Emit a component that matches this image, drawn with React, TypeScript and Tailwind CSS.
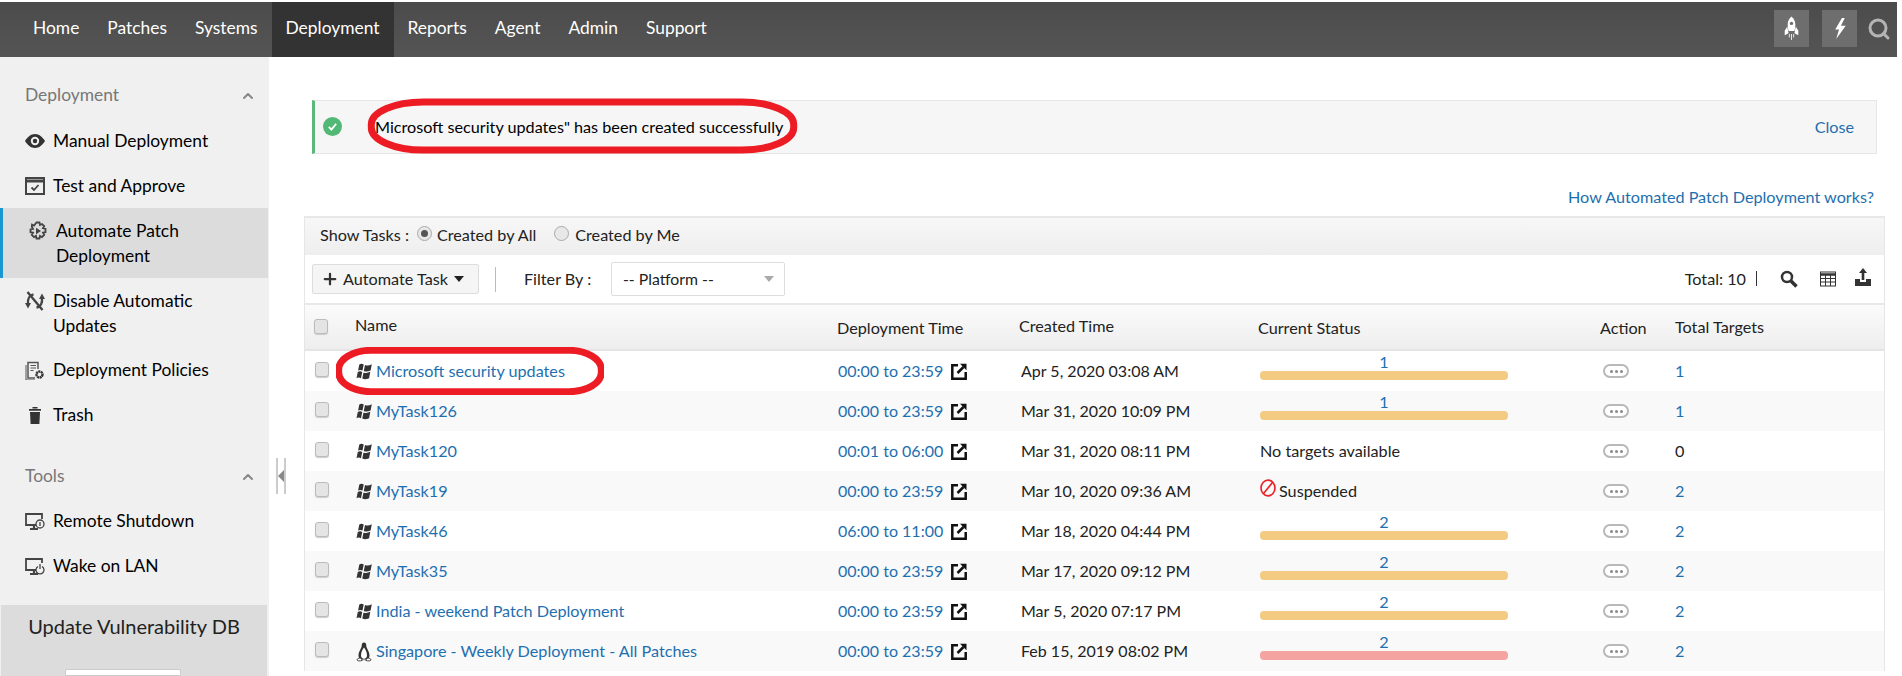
import { ChevronUp, Search, Plus } from "lucide-react";
import type { ReactNode } from "react";

const navItems = ["Home", "Patches", "Systems", "Deployment", "Reports", "Agent", "Admin", "Support"];

const tasks = [
    { name: "Microsoft security updates", time: "00:00 to 23:59", created: "Apr 5, 2020 03:08 AM", status: "1", targets: "1", os: "win" },
    { name: "MyTask126", time: "00:00 to 23:59", created: "Mar 31, 2020 10:09 PM", status: "1", targets: "1", os: "win" },
    { name: "MyTask120", time: "00:01 to 06:00", created: "Mar 31, 2020 08:11 PM", status: "none", targets: "0", os: "win" },
    { name: "MyTask19", time: "00:00 to 23:59", created: "Mar 10, 2020 09:36 AM", status: "suspended", targets: "2", os: "win" },
    { name: "MyTask46", time: "06:00 to 11:00", created: "Mar 18, 2020 04:44 PM", status: "2", targets: "2", os: "win" },
    { name: "MyTask35", time: "00:00 to 23:59", created: "Mar 17, 2020 09:12 PM", status: "2", targets: "2", os: "win" },
    { name: "India - weekend Patch Deployment", time: "00:00 to 23:59", created: "Mar 5, 2020 07:17 PM", status: "2", targets: "2", os: "win" },
    { name: "Singapore - Weekly Deployment - All Patches", time: "00:00 to 23:59", created: "Feb 15, 2019 08:02 PM", status: "2", targets: "2", os: "linux", failed: true },
];

const rowGrid = "grid grid-cols-[50px_482px_182px_239px_342px_75px_1fr] items-center";

function WindowsIcon() {
    return (
        <svg viewBox="0 0 17 17" className="w-[17px] h-[17px] shrink-0 mt-[2px]" fill="#333">
            <path d="M3.300 1.600c1.500-1 3-.9 4.400-.2L6.500 7.600c-1.500-.8-3-.9-4.400 0z" />
            <path d="M9 1.900c1.900 1 4 .8 6.800-.6l-1.200 6.200c-2.600 1.300-4.700 1.400-6.800.6z" />
            <path d="M1.800 9c1.500-.9 2.900-.9 4.400-.1L5 15.300c-1.500-.9-3-1-4.500-.1z" />
            <path d="M7.500 9.400c2 .8 4.200.7 6.800-.6l-1.200 6.400c-2.700 1.300-4.800 1.300-6.800.4z" />
        </svg>
    );
}

function LinuxIcon() {
    return (
        <svg viewBox="0 0 16 20" className="w-4 h-5 shrink-0 mt-[2px]">
            <path d="M8 .5C6.200.5 5.600 2 5.700 4c0 2-3.200 5.500-3.200 9.500 0 1.800.8 3.200 2 4h7c1.200-.8 2-2.200 2-4 0-4-3.200-7.500-3.200-9.500C10.400 2 9.800.5 8 .5z" fill="#333" />
            <path d="M8 5.500c-1.300 1.500-3 4.500-3 8 0 1.800 1.200 3.300 3 3.300s3-1.500 3-3.300c0-3.500-1.700-6.500-3-8z" fill="#fff" />
            <path d="M4.500 16c-1.500 0-3.500.8-3.500 1.800s2.500 1.700 5.500.5zM11.500 16c1.500 0 3.500.8 3.500 1.800s-2.500 1.700-5.500.5z" fill="#fff" stroke="#333" strokeWidth="0.900" />
        </svg>
    );
}

function OpenIcon() {
    return (
        <svg viewBox="0 0 16 17" className="w-4 h-[17px] shrink-0" fill="none" stroke="#111" strokeWidth="2.500">
            <path d="M7 2.300H1.300v13.400h13.400V9" />
            <path d="M6.500 10 12.500 4" />
            <path d="M9 .8h6.500v6.500z" fill="#111" stroke="none" />
        </svg>
    );
}

function ActionDots() {
    return (
        <span className="flex items-center justify-center gap-[2px] w-[26px] h-[14px] rounded-full border-2 border-[#b9b9b9] bg-white">
            <i className="w-[3px] h-[3px] rounded-full bg-[#888]" />
            <i className="w-[3px] h-[3px] rounded-full bg-[#888]" />
            <i className="w-[3px] h-[3px] rounded-full bg-[#888]" />
        </span>
    );
}

function Checkbox() {
    return <span className="block w-[14px] h-[15px] rounded-[3px] border border-[#bbb] bg-[#e4e4e4] shadow-[0_1px_1px_#ccc]" />;
}

function Radio({ on }: { on?: boolean }) {
    return (
        <span className="flex items-center justify-center w-[15px] h-[15px] rounded-full border border-[#aaa] bg-[#e8e8e8] -mt-1">
            {on && <i className="w-[7px] h-[7px] rounded-full bg-[#555]" />}
        </span>
    );
}

function RedRing({ className }: { className: string }) {
    return (
        <svg className={`absolute pointer-events-none ${className}`} viewBox="0 0 100 100" preserveAspectRatio="none">
            <rect x="1" y="7" width="98" height="86" rx="12" ry="40" fill="none" stroke="#ed1c24" strokeWidth="7" vectorEffect="non-scaling-stroke" />
        </svg>
    );
}

function SideItem({ icon, children, active }: { icon: ReactNode; children: ReactNode; active?: boolean }) {
    return (
        <div
            className={
                active
                    ? "flex items-start h-[70px] w-[268px] pl-[25px] pt-[10px] border-l-[3px] border-[#1a97d0] bg-[#dcdcdc] leading-[25px] text-[17.400px] text-black"
                    : "flex items-start pl-[25px] pt-[10px] pb-[10px] leading-[25px] text-[17.400px] text-black"
            }
        >
            <span className="w-[28px] h-[25px] flex items-center shrink-0">{icon}</span>
            <span>{children}</span>
        </div>
    );
}

function SideHeading({ label }: { label: string }) {
    return (
        <div className="flex items-center justify-between pl-[25px] pr-[13px] h-[25px] text-[17.400px] text-[#777]">
            {label}
            <ChevronUp size={16} strokeWidth={3} className="text-[#888]" />
        </div>
    );
}

const ic = "w-[20px] h-[20px] shrink-0";

function Sidebar() {
    return (
        <aside className="w-[269px] shrink-0 bg-[#f0f0f0] flex flex-col">
            <div className="pt-[26px]">
                <SideHeading label="Deployment" />
                <div className="mt-[10px]">
                    <SideItem
                        icon={
                            <svg viewBox="0 0 20 14" className="w-[20px] h-[14px]" fill="#333">
                                <path fillRule="evenodd" d="M10 0c4 0 7.500 2.800 10 7-2.500 4.200-6 7-10 7S2.500 11.200 0 7c2.500-4.200 6-7 10-7zm0 2.800a4.200 4.200 0 1 0 0 8.400 4.200 4.200 0 0 0 0-8.400z" />
                                <circle cx="10" cy="7" r="2.200" />
                            </svg>
                        }
                    >
                        Manual Deployment
                    </SideItem>
                    <SideItem
                        icon={
                            <svg viewBox="0 0 20 20" className={ic} fill="none" stroke="#444" strokeWidth="2">
                                <rect x="1" y="2" width="18" height="16" />
                                <path d="M1 5h18" strokeWidth="3" />
                                <path d="M6.500 11.500l2.500 2.500 4.500-5" strokeWidth="1.800" />
                            </svg>
                        }
                    >
                        Test and Approve
                    </SideItem>
                    <SideItem
                        active
                        icon={
                            <svg viewBox="0 0 20 20" className={ic} fill="none" stroke="#444" strokeWidth="1.800">
                                <path d="M8.500 1.500h3l.5 2.500 2-1 2.200 2.200-1.200 2 2.500.6v3.400l-2.500.5 1.200 2.200-2.200 2.200-2-1.200-.5 2.600h-3l-.5-2.600-2 1.200-2.200-2.200 1.200-2.200-2.500-.5V8.400l2.500-.6-1.200-2L4 3.600l2 1z" />
                                <path d="M8 6.800l5 3.200-5 3.200z" fill="#444" stroke="none" />
                            </svg>
                        }
                    >
                        Automate Patch
                        <br />
                        Deployment
                    </SideItem>
                    <SideItem
                        icon={
                            <svg viewBox="0 0 20 20" className={ic} fill="none" stroke="#444" strokeWidth="2.400">
                                <path d="M2.500 1 17.500 19" />
                                <path d="M8.500 3.500C4.500 4 2.500 8 3 13" />
                                <path d="M11.500 16.500c4-.5 6-4.500 5.500-9.500" />
                                <path d="M0 12h6l-3 5.500zM14 8h6l-3-5.500z" fill="#444" stroke="none" />
                            </svg>
                        }
                    >
                        Disable Automatic
                        <br />
                        Updates
                    </SideItem>
                    <div className="-mt-[1px]">
                        <SideItem
                            icon={
                                <svg viewBox="0 0 20 20" className={ic} fill="none" stroke="#555" strokeWidth="1.500">
                                    <path d="M10 18H3V2.500h10V9" />
                                    <path d="M1 5v15h9" strokeWidth="1" />
                                    <path d="M5.500 5.500h5.500M5.500 8h5.500M5.500 10.500h3" strokeWidth="1.200" />
                                    <circle cx="14.500" cy="14.500" r="3" stroke="#333" strokeWidth="2.400" strokeDasharray="2 0.500" />
                                </svg>
                            }
                        >
                            Deployment Policies
                        </SideItem>
                    </div>
                    <SideItem
                        icon={
                            <svg viewBox="0 0 20 20" className={ic} fill="#333">
                                <path d="M4 4h12v1.800H4zM7.500 2h5v1.500h-5zM5 7h10l-.6 12H5.600z" />
                            </svg>
                        }
                    >
                        Trash
                    </SideItem>
                </div>
            </div>
            <div className="mt-[27px]">
                <SideHeading label="Tools" />
                <div className="mt-[9px]">
                    <SideItem
                        icon={
                            <svg viewBox="0 0 20 20" className={ic} fill="none" stroke="#444" strokeWidth="1.800">
                                <path d="M17 8V3H1v11h10" />
                                <path d="M5 18h8M9 14v4" strokeWidth="2.200" />
                                <circle cx="15" cy="13" r="4" fill="#f0f0f0" strokeWidth="1.300" />
                                <path d="M15 11v4" strokeWidth="1.300" />
                            </svg>
                        }
                    >
                        Remote Shutdown
                    </SideItem>
                    <SideItem
                        icon={
                            <svg viewBox="0 0 20 20" className={ic} fill="none" stroke="#444" strokeWidth="1.800">
                                <path d="M17 7V3H1v11h10" />
                                <path d="M5 18h8M9 14v4" strokeWidth="2.200" />
                                <path d="M13 10.500a4 4 0 1 0 4 0M15 8v5" strokeWidth="1.300" />
                            </svg>
                        }
                    >
                        Wake on LAN
                    </SideItem>
                </div>
            </div>
            <div className="mt-[17px] mx-[1px] flex-1 bg-[#dcdcdc] w-[266px] flex flex-col items-center pt-[9px]">
                <span className="text-[20px] leading-[25px] text-[#222]">Update Vulnerability DB</span>
                <span className="mt-[30px] self-start ml-[64px] w-[116px] flex-1 bg-white border border-[#ccc] rounded-t-[2px]" />
            </div>
        </aside>
    );
}

function StatusCell({ task }: { task: (typeof tasks)[number] }) {
    if (task.status === "none") return <span className="pl-[2px]">No targets available</span>;
    if (task.status === "suspended")
        return (
            <span className="pl-[2px] flex items-center gap-[3px]">
                <svg viewBox="0 0 16 18" className="w-4 h-[18px] -mt-[5px]" fill="none" stroke="#e8262a" strokeWidth="1.700">
                    <ellipse cx="8" cy="9" rx="7" ry="7.800" />
                    <path d="M3.500 14.500 12.500 3.500" />
                </svg>
                Suspended
            </span>
        );
    return (
        <div className="pl-[2px] w-[250px] flex flex-col items-center -mt-[9px]">
            <span className="text-[#1e6fb0] leading-[17px]">{task.status}</span>
            <span className={`block w-[248px] h-[9px] mt-[1px] rounded-[4px] ${task.failed ? "bg-[#f4a3a0]" : "bg-[#f3cb82]"}`} />
        </div>
    );
}

export default function App() {
    return (
        <div className="h-[676px] w-[1902px] overflow-hidden bg-white pt-[2px] font-['Lato',sans-serif] text-[16.200px] text-[#222] flex flex-col">
            <header className="h-[55px] w-[1897px] shrink-0 bg-gradient-to-b from-[#4b4b4b] to-[#555] flex items-stretch justify-between text-white text-[17.400px]">
                <nav className="flex pl-[19px]">
                    {navItems.map((item) => (
                        <a key={item} className={`flex items-center px-[14px] pb-[3px] ${item === "Deployment" ? "bg-[#333]" : ""}`}>
                            {item}
                        </a>
                    ))}
                </nav>
                <div className="flex items-center pr-[6px] -mt-[2px]">
                    <span className="w-[35px] h-[37px] bg-[#6e6e6e] flex items-center justify-center">
                        <svg viewBox="0 0 20 28" className="w-[17px] h-[25px]" fill="#fff">
                            <path d="M10 0c3 2.500 4.500 6 4.500 9.500 0 2.500-.5 5-1 7.500h-7c-.5-2.500-1-5-1-7.500C5.500 6 7 2.500 10 0z" />
                            <path d="M5 11.500 2 16.500V22l4.500-2.500zM15 11.500l3 5V22l-4.500-2.500z" />
                            <path d="M7.500 20.500v4M10 20.500v7M12.500 20.500v4" stroke="#fff" strokeWidth="1" />
                            <circle cx="10" cy="8" r="2" fill="#6e6e6e" />
                        </svg>
                    </span>
                    <span className="ml-[13px] w-[35px] h-[37px] bg-[#6e6e6e] flex items-center justify-center">
                        <svg viewBox="0 0 14 22" className="w-[14px] h-[21px]" fill="#fff">
                            <path d="M9 0 2 12h4L3 22l10-14H8l4-8z" />
                        </svg>
                    </span>
                    <Search size={24} strokeWidth={3} className="ml-[10px] text-[#b4b4b4]" />
                </div>
            </header>

            <div className="flex flex-1 min-h-0">
                <Sidebar />

                <div className="w-[35px] shrink-0 relative">
                    {/* collapse handle */}
                    <div className="absolute left-[7px] top-[401px] w-[10px] h-[36px] flex items-center justify-center border-x-2 border-[#ccc]">
                        <i className="w-0 h-0 border-y-[6px] border-y-transparent border-r-[6px] border-r-[#888]" />
                    </div>
                </div>

                <main className="flex-1 min-w-0 pr-[17px]">
                    <div className="ml-[8px] mr-[8px] mt-[43px] h-[54px] flex items-center justify-between border border-[#e6e6e6] border-l-[3px] border-l-[#5cb878] bg-[#f6f6f6] pr-[22px]">
                        <div className="flex items-center">
                            <span className="ml-[8px] w-[19px] h-[19px] rounded-full bg-[#52b876] flex items-center justify-center">
                                <svg viewBox="0 0 12 12" className="w-[11px] h-[11px]" fill="none" stroke="#fff" strokeWidth="2">
                                    <path d="M2 6.500l2.800 2.800L10 3" />
                                </svg>
                            </span>
                            <span className="relative ml-[33px] text-black">
                                Microsoft security updates" has been created successfully
                                <RedRing className="-left-[8px] -top-[17px] w-[431px] h-[56px]" />
                            </span>
                        </div>
                        <a className="text-[#1e6fb0]">Close</a>
                    </div>

                    <div className="mr-[11px] mt-[33px] h-[19px] leading-[19px] text-right text-[#1e6fb0]">How Automated Patch Deployment works?</div>

                    <section className="mt-[10px] border-x border-[#e6e6e6]">
                        <div className="h-[39px] pb-[2px] border-t-2 border-[#e8e8e8] bg-gradient-to-b from-[#f7f7f7] to-[#eeeeee] flex items-center pl-[15px]">
                            <span>Show Tasks :</span>
                            <span className="ml-[8px]"><Radio on /></span>
                            <span className="ml-[5px]">Created by All</span>
                            <span className="ml-[18px]"><Radio /></span>
                            <span className="ml-[6px]">Created by Me</span>
                        </div>

                        <div className="h-[50px] flex items-center border-b-2 border-[#e8e8e8] pl-[7px] pr-[13px]">
                            <button className="h-[30px] w-[167px] flex items-center pl-[8px] rounded-[2px] border border-[#ddd] bg-[#f5f5f5]">
                                <Plus size={18} strokeWidth={3} className="text-[#333] mr-[4px]" />
                                Automate Task
                                <i className="ml-[6px] w-0 h-0 border-x-[5px] border-x-transparent border-t-[6px] border-t-[#222]" />
                            </button>
                            <span className="ml-[16px] w-px h-[25px] bg-[#bbb]" />
                            <span className="ml-[28px] w-[87px]">Filter By :</span>
                            <div className="h-[34px] w-[174px] flex items-center justify-between pl-[11px] pr-[10px] border border-[#ddd] rounded-[2px] bg-white text-[15.800px]">
                                -- Platform --
                                <i className="w-0 h-0 border-x-[5px] border-x-transparent border-t-[6px] border-t-[#aaa]" />
                            </div>
                            <div className="ml-auto flex items-center">
                                <span>Total: 10</span>
                                <span className="ml-[10px] w-px h-[15px] bg-[#333]" />
                                <svg viewBox="0 0 18 18" className="ml-[23px] w-[18px] h-[18px]" fill="none" stroke="#333">
                                    <circle cx="7" cy="7" r="5" strokeWidth="2.500" />
                                    <path d="M11 11l5.500 5.500" strokeWidth="3.500" />
                                </svg>
                                <svg viewBox="0 0 16 16" className="ml-[22px] w-4 h-4" fill="none" stroke="#333" strokeWidth="1">
                                    <rect x="0.500" y="1" width="15" height="14" />
                                    <path d="M.5 3.500h15" strokeWidth="2.500" />
                                    <path d="M.5 7.500h15M.5 11h15M5.500 3v12M10.500 3v12" />
                                </svg>
                                <svg viewBox="0 0 16 18" className="ml-[19px] w-4 h-[18px] -mt-1" fill="#333">
                                    <path d="M8 0l4 5H9.300v7H6.700V5H4z" />
                                    <path d="M0 11h5v3h6v-3h5v7H0z" />
                                </svg>
                            </div>
                        </div>

                        <div className={`${rowGrid} h-[46px] pt-[2px] border-b-2 border-[#e4e4e4] bg-gradient-to-b from-[#fbfbfb] to-[#eeeeee]`}>
                            <span className="pl-[9px] -mt-1"><Checkbox /></span>
                            <span className="-mt-[6px]">Name</span>
                            <span>Deployment Time</span>
                            <span className="-mt-1">Created Time</span>
                            <span>Current Status</span>
                            <span>Action</span>
                            <span className="-mt-[2px]">Total Targets</span>
                        </div>

                        {tasks.map((task, i) => (
                            <div key={task.name} className={`${rowGrid} h-[40px] ${i % 2 ? "bg-[#f9f9f9]" : "bg-white"}`}>
                                <span className="pl-[10px] -mt-1"><Checkbox /></span>
                                <span className={`relative flex items-center pl-[1px] text-[#1e6fb0] ${task.os === "win" ? "gap-[3px]" : "gap-[4px]"}`}>
                                    {task.os === "win" ? <WindowsIcon /> : <LinuxIcon />}
                                    {task.name}
                                    {i === 0 && <RedRing className="-left-[19px] -top-[12px] w-[268px] h-[48px]" />}
                                </span>
                                <span className="flex items-center pl-[1px] gap-[8px] text-[#1e6fb0] text-[16px]">
                                    {task.time}
                                    <OpenIcon />
                                </span>
                                <span className="pl-[2px] text-[16px]">{task.created}</span>
                                <StatusCell task={task} />
                                <span className="pl-[3px]"><ActionDots /></span>
                                <span className={task.targets === "0" ? "" : "text-[#1e6fb0]"}>{task.targets}</span>
                            </div>
                        ))}
                    </section>
                </main>
            </div>
        </div>
    );
}
